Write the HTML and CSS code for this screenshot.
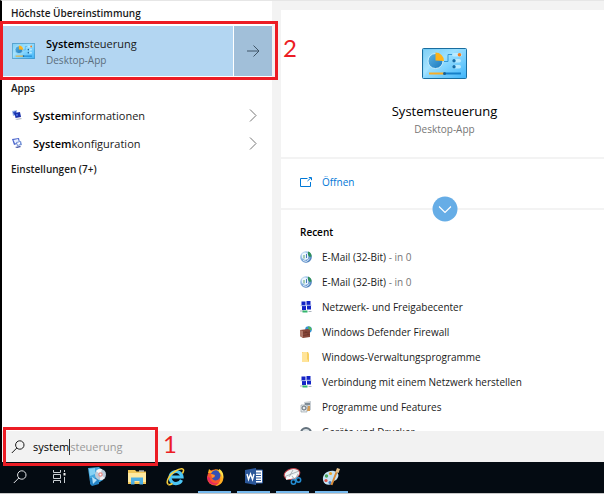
FILE: index.html
```html
<!DOCTYPE html>
<html lang="de">

<head>
    <meta charset="UTF-8">
    <meta name="viewport" content="width=device-width, initial-scale=1.0">
    <title>Windows-Suche</title>
    <link rel="stylesheet" href="styles.css">
</head>

<body>
    <!-- Shared icons -->
    <svg class="sprite" aria-hidden="true">
        <defs>
            <linearGradient id="panelFill" x1="0" y1="0" x2="1" y2="1">
                <stop offset="0" stop-color="#6cc8f4" />
                <stop offset="0.4" stop-color="#9be0ff" />
                <stop offset="1" stop-color="#3eb4fa" />
            </linearGradient>
            <linearGradient id="pieFill" x1="0" y1="0" x2="1" y2="1">
                <stop offset="0" stop-color="#5db4e4" />
                <stop offset="1" stop-color="#1878bd" />
            </linearGradient>
            <radialGradient id="globeFill" cx="0.35" cy="0.3" r="0.8">
                <stop offset="0" stop-color="#e4f3ff" />
                <stop offset="0.5" stop-color="#8fb8e2" />
                <stop offset="1" stop-color="#2f68ae" />
            </radialGradient>
        </defs>
        <symbol id="control-panel" viewBox="0 0 45 31">
            <rect x="0.5" y="0.5" width="44" height="30" rx="1" fill="url(#panelFill)" stroke="#196d9f" />
            <path d="M2 29 18 2H2z" fill="#fff" opacity="0.12" />
            <circle cx="13.5" cy="13" r="7.5" fill="url(#pieFill)" stroke="#c9efff" />
            <path d="M13.5 12.5V4.5a8.5 8.5 0 0 1 8.5 8.500z" fill="#ffb31a" />
            <path d="M22 13.5h4V6.5h5" fill="none" stroke="#3698d3" />
            <rect x="30" y="5" width="10" height="3.5" rx="1.7" fill="#b9eaff" />
            <rect x="30" y="11" width="9" height="3.5" rx="1.7" fill="#b9eaff" />
            <rect x="30" y="17" width="9" height="3.5" rx="1.7" fill="#b9eaff" />
            <circle cx="37.5" cy="6.7" r="1.8" fill="#f47c20" />
            <circle cx="32" cy="12.7" r="1.7" fill="#146ca9" />
            <circle cx="32" cy="18.7" r="1.7" fill="#146ca9" />
            <path d="M7 25.5h15" stroke="#f6ad28" stroke-width="2" />
            <path d="M23 25.5h16" stroke="#1680c9" stroke-width="2" />
            <circle cx="22.5" cy="25.5" r="1.5" fill="#125f98" />
        </symbol>
        <symbol id="sys-info" viewBox="0 0 10 10">
            <path d="M0 1 5 0v5L1 6z" fill="#9db8e8" />
            <path d="M1 2 4 1v3L2 5z" fill="#2c4dc4" />
            <path d="M2.500 3 8 2l1 5-5.500 1z" fill="#1a2fa8" />
            <path d="M4 4h2v2H4z" fill="#3d68dc" />
            <path d="M3 9l6-1 1 1-5 1z" fill="#b7bdcc" />
        </symbol>
        <symbol id="sys-config" viewBox="0 0 10 10">
            <path d="M0 1 7 0l1 5-6 2z" fill="#4b65cc" />
            <path d="M1.5 2 6 1l1 3-4 1.500z" fill="#eaf1ff" />
            <path d="M4 4 9 3l1 4-5 1z" fill="#7b97d8" />
            <path d="M5 5l3-1v2L6 7z" fill="#fff" />
            <path d="M3 9l5-1 1 1-4 1z" fill="#3d4da0" />
        </symbol>
        <symbol id="chevron" viewBox="0 0 8 13">
            <path d="M1 0.500 7 6.500 1 12.500" fill="none" stroke="#777" />
        </symbol>
        <symbol id="magnifier" viewBox="0 0 14 14">
            <circle cx="8.800" cy="5" r="4.200" fill="none" stroke="currentColor" />
            <path d="M5.800 8 0.800 13" stroke="currentColor" />
        </symbol>
        <symbol id="globe" viewBox="0 0 12 12">
            <circle cx="6" cy="6" r="5.800" fill="url(#globeFill)" />
            <path d="M8 0.600c2.300.6 3.600 2.400 3.600 5L9.500 6 8 4z" fill="#2f8f5a" />
            <path d="M2 3l3-1.500 3 1.500v5l-3 1-3-2z" fill="#f1f8ff" opacity="0.9" />
            <path d="M4 4v3.500" stroke="#5ba36a" />
            <path d="M6.500 3v4" stroke="#4b79bd" />
            <path d="M3 9.500l3.500 1 3-2.500" fill="none" stroke="#dceafa" />
        </symbol>
        <symbol id="network" viewBox="0 0 12 12">
            <path d="M1.500 0.500h4v4h-4zM6.500 0h4v4h-4zM2 5h4v4H2zM7 4.500h4v4H7z" fill="#1424c6" />
            <path d="M0.500 4.700h5M6 4.200h5.500" stroke="#9fb4e6" stroke-width="0.800" />
            <path d="M0 10h4M8.500 10.500h3" stroke="#aab3bd" />
            <path d="M2.500 9.500h5v2h-5z" fill="#33b56c" />
        </symbol>
        <symbol id="firewall" viewBox="0 0 12 12">
            <circle cx="8.500" cy="3.500" r="3.300" fill="#3592d2" />
            <path d="M8 0.500c2 0 3.500 1 3.500 3L9 5z" fill="#4fb854" />
            <path d="M0 4l8-1 2 1v7l-7 1-3-2z" fill="#87473a" />
            <path d="M0 4l3 1v7l-3-2z" fill="#b07a6b" />
            <path d="M3 7l7-1M3 9.500 10 8.500M6 5v2M8 7v2" stroke="#673127" stroke-width="0.600" />
        </symbol>
        <symbol id="folder" viewBox="0 0 12 12">
            <path d="M2 1h6l1 2v8H2z" fill="#f6cf63" />
            <path d="M3 1h4v7l2 3H2V2z" fill="#ffe49a" />
        </symbol>
        <symbol id="programs" viewBox="0 0 12 12">
            <path d="M4 1 11 0v9l-6 1z" fill="#c8ced3" />
            <path d="M5 2h5v2H5z" fill="#7f8c96" />
            <path d="M1 4h6v7H1z" fill="#e7ebee" stroke="#8c979f" stroke-width="0.600" />
            <circle cx="4" cy="7" r="2" fill="none" stroke="#5f6b74" />
            <path d="M8 5h2v5H7z" fill="#d59b52" />
        </symbol>
        <symbol id="devices" viewBox="0 0 12 12">
            <circle cx="6" cy="7" r="5" fill="#dfe5e9" stroke="#63717c" stroke-width="2" />
        </symbol>
    </svg>

    <main class="search-window">
        <section class="results">
            <h2 class="group-title">Höchste Übereinstimmung</h2>
            <div class="best-match">
                <button class="best-open">
                    <svg class="best-icon"><use href="#control-panel" /></svg>
                    <span class="best-text">
                        <span class="best-name"><b>System</b>steuerung</span>
                        <span class="best-kind">Desktop-App</span>
                    </span>
                </button>
                <button class="best-more" aria-label="Details anzeigen">
                    <svg width="13" height="12" viewBox="0 0 13 12">
                        <path d="M0 6h12M6.500 0.500 12 6 6.500 11.500" fill="none" stroke="#3f5568" />
                    </svg>
                </button>
                <div class="marker marker-two"><span>2</span></div>
            </div>

            <h2 class="group-title">Apps</h2>
            <button class="result">
                <svg class="result-icon"><use href="#sys-info" /></svg>
                <span class="result-name"><b>System</b>informationen</span>
                <svg class="result-chevron"><use href="#chevron" /></svg>
            </button>
            <button class="result">
                <svg class="result-icon"><use href="#sys-config" /></svg>
                <span class="result-name"><b>System</b>konfiguration</span>
                <svg class="result-chevron"><use href="#chevron" /></svg>
            </button>

            <h2 class="group-title">Einstellungen (7+)</h2>
        </section>

        <section class="details">
            <div class="hero">
                <svg class="hero-icon"><use href="#control-panel" /></svg>
                <h1 class="hero-name">Systemsteuerung</h1>
                <p class="hero-kind">Desktop-App</p>
            </div>
            <div class="actions">
                <button class="open-action">
                    <svg width="12" height="10" viewBox="0 0 12 10">
                        <path d="M7.500 1.500h-7v8h10V5" fill="none" stroke="currentColor" />
                        <path d="M7.500 4 11 0.800M8.800 0.500h2.700v2.700" fill="none" stroke="currentColor" />
                    </svg>
                    <span>Öffnen</span>
                </button>
                <button class="expand" aria-label="Mehr anzeigen">
                    <svg width="13" height="8" viewBox="0 0 13 8">
                        <path d="M0.500 1 6.500 7 12.500 1" fill="none" stroke="#fff" stroke-width="1.200" />
                    </svg>
                </button>
            </div>
            <h2 class="recent-title">Recent</h2>
            <ul class="recent-list">
                <li><svg><use href="#globe" /></svg><span>E-Mail (32-Bit) <i>- in 0</i></span></li>
                <li><svg><use href="#globe" /></svg><span>E-Mail (32-Bit) <i>- in 0</i></span></li>
                <li><svg><use href="#network" /></svg><span>Netzwerk- und Freigabecenter</span></li>
                <li><svg><use href="#firewall" /></svg><span>Windows Defender Firewall</span></li>
                <li><svg><use href="#folder" /></svg><span>Windows-Verwaltungsprogramme</span></li>
                <li><svg><use href="#network" /></svg><span>Verbindung mit einem Netzwerk herstellen</span></li>
                <li><svg><use href="#programs" /></svg><span>Programme und Features</span></li>
                <li><svg><use href="#devices" /></svg><span>Geräte und Drucker</span></li>
            </ul>
        </section>
    </main>

    <div class="search-bar">
        <label class="search-icon" for="searchInput" aria-label="Suchen"><svg width="14" height="14"><use href="#magnifier" /></svg></label>
        <input type="text" id="searchInput" value="system" size="6" autocomplete="off">
        <span class="suggestion">steuerung</span>
        <div class="marker marker-one"><span>1</span></div>
    </div>

    <nav class="taskbar">
        <button aria-label="Suchen">
            <svg width="14" height="14"><use href="#magnifier" /></svg>
        </button>
        <button aria-label="Aktive Anwendungen">
            <svg width="14" height="13" viewBox="0 0 14 13">
                <path d="M1.500 0v2.500h7V0M1.500 13v-2.500h7V13M1.500 4.500h7v4h-7zM12.500 0v2M12.500 7v6" fill="none" stroke="#c9ced2" />
                <path d="M11.500 3h2v2.500h-2z" fill="#eee" />
            </svg>
        </button>
        <button aria-label="Softwarecenter">
            <svg width="19" height="19" viewBox="0 0 19 19">
                <path d="M0 1 11 0l4 4v9l-5 3-8-1z" fill="#45a8df" />
                <path d="M1 2 7 1v6L2 9z" fill="#86d2f5" />
                <path d="M2 11h9v6l-7 2-2-2z" fill="#2583c5" />
                <circle cx="12.500" cy="7.500" r="5.500" fill="#bccbd8" />
                <path d="M12.500 7.500 8 4a6 6 0 0 1 6-2z" fill="#f5f8fb" />
                <path d="M12.500 7.500l4.500 3.500a6 6 0 0 1-5 2z" fill="#eef1f4" />
                <circle cx="12.500" cy="7.500" r="2.200" fill="#e98b87" />
                <circle cx="12.500" cy="7.500" r="1" fill="#fff" />
                <path d="M4 10l5 3-4 4z" fill="#b5e2f8" />
            </svg>
        </button>
        <button aria-label="Explorer">
            <svg width="18" height="16" viewBox="0 0 18 16">
                <path d="M0 1h7l1.500 1.500H18V15H0z" fill="#f1c75a" />
                <path d="M0 4h18v9H0z" fill="#ffe9a0" />
                <path d="M3 15.500V8.500h12v7h-3.500V12h-5v3.500z" fill="#4dafe5" />
                <path d="M11 2h5" stroke="#fff" />
            </svg>
        </button>
        <button aria-label="Internet Explorer">
            <svg width="19" height="18" viewBox="0 0 19 18">
                <path d="M15.500 12a6 6 0 1 1 .5-3H5" fill="none" stroke="#4cc5f3" stroke-width="3.200" />
                <path d="M2.500 16.500C-1 15 3 6.500 9.500 3c4.500-2.800 8.500-3 8-.2-.2 1-.7 2-1.200 2.700" fill="none" stroke="#f7cd3c" stroke-width="1.600" />
                <path d="M2.500 16.500c1 .5 2.500 0 4-1" fill="none" stroke="#f7cd3c" stroke-width="1.600" />
            </svg>
        </button>
        <button class="running" aria-label="Firefox">
            <svg width="18" height="18" viewBox="0 0 18 18">
                <circle cx="9" cy="9.500" r="8" fill="#f6562d" />
                <path d="M2 5 3 1l3 2.500C9 1 12 1 14 3c3 2 4 6 3 9-1 4-5 6-8 6 4-2 6-5 5-9l-4-5-5 1z" fill="#ffae21" />
                <path d="M5 6c1-4 6-5 8-2 2 2 2 5 0 7-2 2-6 2-7-1l3-1-1-2z" fill="#3551b5" />
                <path d="M5 6l4 1-1 2-2 1z" fill="#ff932e" />
                <path d="M1 8c0 7 7 11 12 7-5 1-9-1-9-5z" fill="#e62862" />
                <path d="M13 1c4 2 5 6 4 10-1-4-2-6-4-7z" fill="#ffe34b" />
            </svg>
        </button>
        <button class="running" aria-label="Word">
            <svg width="18" height="17" viewBox="0 0 18 17">
                <path d="M9 2h8.500v13H9z" fill="#fff" stroke="#2b579a" />
                <path d="M11 5h5M11 7.500h5M11 10h5M11 12.500h5" stroke="#2b579a" />
                <path d="M0 2 11 0v17L0 15z" fill="#2b579a" />
                <path d="M2 6l1.500 5.500L5.500 6l2 5.500L9 6" fill="none" stroke="#fff" stroke-width="1.400" />
            </svg>
        </button>
        <button class="running" aria-label="Snipping Tool">
            <svg width="19" height="18" viewBox="0 0 19 18">
                <ellipse cx="9" cy="6" rx="8" ry="5.200" transform="rotate(-16 9 6)" fill="#eef1f3" stroke="#c54149" />
                <path d="M2 8.500 16 3M5 11l5-9" stroke="#8e989e" stroke-width="0.700" />
                <path d="M3 11 15 7" stroke="#fff" stroke-width="2" />
                <path d="M9 8l3 4M15 6l-3 6" stroke="#aeb9c1" stroke-width="1.200" />
                <circle cx="10.500" cy="14" r="2.200" fill="none" stroke="#238bd0" stroke-width="1.500" />
                <circle cx="15.500" cy="12" r="2.200" fill="none" stroke="#238bd0" stroke-width="1.500" />
            </svg>
        </button>
        <button class="running" aria-label="Paint">
            <svg width="19" height="18" viewBox="0 0 19 18">
                <path d="M1 12C0 6 6 2 12 3c4 1 6 4 3 8-1 2-3 1-4 3-1 4-9 4-10-2z" fill="#c5e2f3" />
                <circle cx="4.500" cy="8" r="1.700" fill="#4aa65b" />
                <circle cx="8.500" cy="5.500" r="1.600" fill="#e8a52e" />
                <circle cx="4" cy="12.500" r="1.600" fill="#df5147" />
                <circle cx="8" cy="14.500" r="1.500" fill="#3f76c4" />
                <path d="M15 3 9.500 17" stroke="#d98a35" stroke-width="2" />
                <path d="M13.500 4 15 0l3 1-1.500 4z" fill="#e9c48c" />
            </svg>
        </button>
    </nav>
</body>

</html>
```
FILE: styles.css
```css
* {
    margin: 0;
    padding: 0;
    box-sizing: border-box;
}

body {
    display: flex;
    flex-direction: column;
    height: 100vh;
    overflow: hidden;
    background: #f3f3f3;
    color: #1a1a1a;
    font-family: 'Open Sans', 'Segoe UI', 'Noto Sans', sans-serif;
    font-size: 10px;
}

button {
    border: none;
    background: none;
    color: inherit;
    font: inherit;
    text-align: left;
    cursor: pointer;
}

svg {
    display: block;
    flex: none;
}

b {
    font-weight: 600;
    color: #000;
}

.sprite {
    position: absolute;
    width: 0;
    height: 0;
}

/* Results and details */
.search-window {
    flex: 1;
    min-height: 0;
    display: grid;
    grid-template-columns: 270px 1fr;
    grid-template-rows: minmax(0, 1fr);
    column-gap: 9px;
    border-left: 2px solid #000;
    border-top: 1px solid #e6e6e6;
}

.results {
    background: #fff;
}

.group-title {
    padding-left: 9px;
    font-size: 10px;
    font-weight: 600;
    line-height: 25px;
}

.best-match {
    position: relative;
    display: flex;
    gap: 1px;
    height: 50px;
}

.best-open {
    flex: 1;
    display: flex;
    align-items: center;
    gap: 11px;
    padding-left: 10px;
    background: #b3d6f2;
}

.best-icon {
    width: 23px;
    height: 16px;
}

.best-text {
    display: flex;
    flex-direction: column;
    padding-top: 2px;
}

.best-name {
    font-size: 11px;
    line-height: 17px;
}

.best-kind {
    color: #5b6e7d;
    line-height: 17px;
}

.best-more {
    width: 38px;
    display: flex;
    align-items: center;
    justify-content: center;
    background: #a1bfd9;
}

.result {
    width: 100%;
    height: 28px;
    display: flex;
    align-items: center;
    padding: 0 15px 0 10px;
    font-size: 11px;
}

.result-icon {
    width: 10px;
    height: 10px;
}

.result-name {
    flex: 1;
    padding-left: 11px;
}

.result-chevron {
    width: 8px;
    height: 13px;
}

.details {
    margin-top: 9px;
    overflow: hidden;
    background: #fff;
}

.hero {
    display: flex;
    flex-direction: column;
    align-items: center;
    height: 149px;
    padding: 38px 0 0 4px;
    border-bottom: 2px solid #f3f3f3;
}

.hero-icon {
    width: 45px;
    height: 31px;
    margin-bottom: 21px;
}

.hero-name {
    font-size: 13px;
    font-weight: 400;
    line-height: 22px;
    color: #000;
}

.hero-kind {
    color: #767676;
    line-height: 15px;
}

.actions {
    position: relative;
    height: 51px;
    padding: 12px 19px 0;
    border-bottom: 2px solid #f3f3f3;
}

.open-action {
    display: flex;
    align-items: center;
    gap: 10px;
    height: 22px;
    color: #0078d7;
}

.expand {
    position: absolute;
    left: calc(50% + 2px);
    bottom: -1px;
    display: flex;
    align-items: center;
    justify-content: center;
    width: 25px;
    height: 25px;
    border-radius: 50%;
    background: #66ade6;
    transform: translate(-50%, 50%);
}

.recent-title {
    padding: 10px 19px 0;
    font-size: 10px;
    font-weight: 600;
    line-height: 24px;
    color: #000;
}

.recent-list {
    list-style: none;
}

.recent-list li {
    display: flex;
    align-items: center;
    gap: 10px;
    height: 25px;
    padding-left: 19px;
    white-space: nowrap;
}

.recent-list svg {
    width: 12px;
    height: 12px;
}

.recent-list i {
    font-style: normal;
    color: #767676;
}

/* Search box */
.search-bar {
    position: relative;
    display: flex;
    align-items: center;
    height: 31px;
    padding-left: 9px;
    border-left: 2px solid #000;
    background: #f2f2f2;
    font-size: 11px;
}

.search-icon {
    margin-right: 8px;
}

.search-bar input {
    field-sizing: content;
    height: 16px;
    border: none;
    border-right: 1px solid #333;
    outline: none;
    background: none;
    color: #000;
    font: inherit;
}

.suggestion {
    color: #999;
}

/* Numbered step markers */
.marker {
    position: absolute;
    border: 3px solid #ec1c24;
    color: #ec1c24;
    font-family: Lato, Calibri, sans-serif;
    font-size: 24px;
    line-height: 28px;
    pointer-events: none;
}

.marker span {
    position: absolute;
    left: 100%;
    top: 0;
    padding-left: 8px;
}

.marker-two {
    inset: -5px -6px -4px -2px;
}

.marker-two span {
    top: 10px;
}

.marker-one {
    top: -4px;
    left: 1px;
    width: 155px;
    height: 39px;
}

/* Taskbar */
.taskbar {
    display: flex;
    height: 32px;
    background: #040b12;
    border-bottom: 1px solid #c8c8c8;
    color: #e4e7ea;
}

.taskbar button {
    display: flex;
    align-items: center;
    justify-content: center;
    width: 33px;
    margin: 0 3px;
    border-bottom: 2px solid transparent;
}

.taskbar .running {
    border-bottom-color: #76b9ed;
}
```
